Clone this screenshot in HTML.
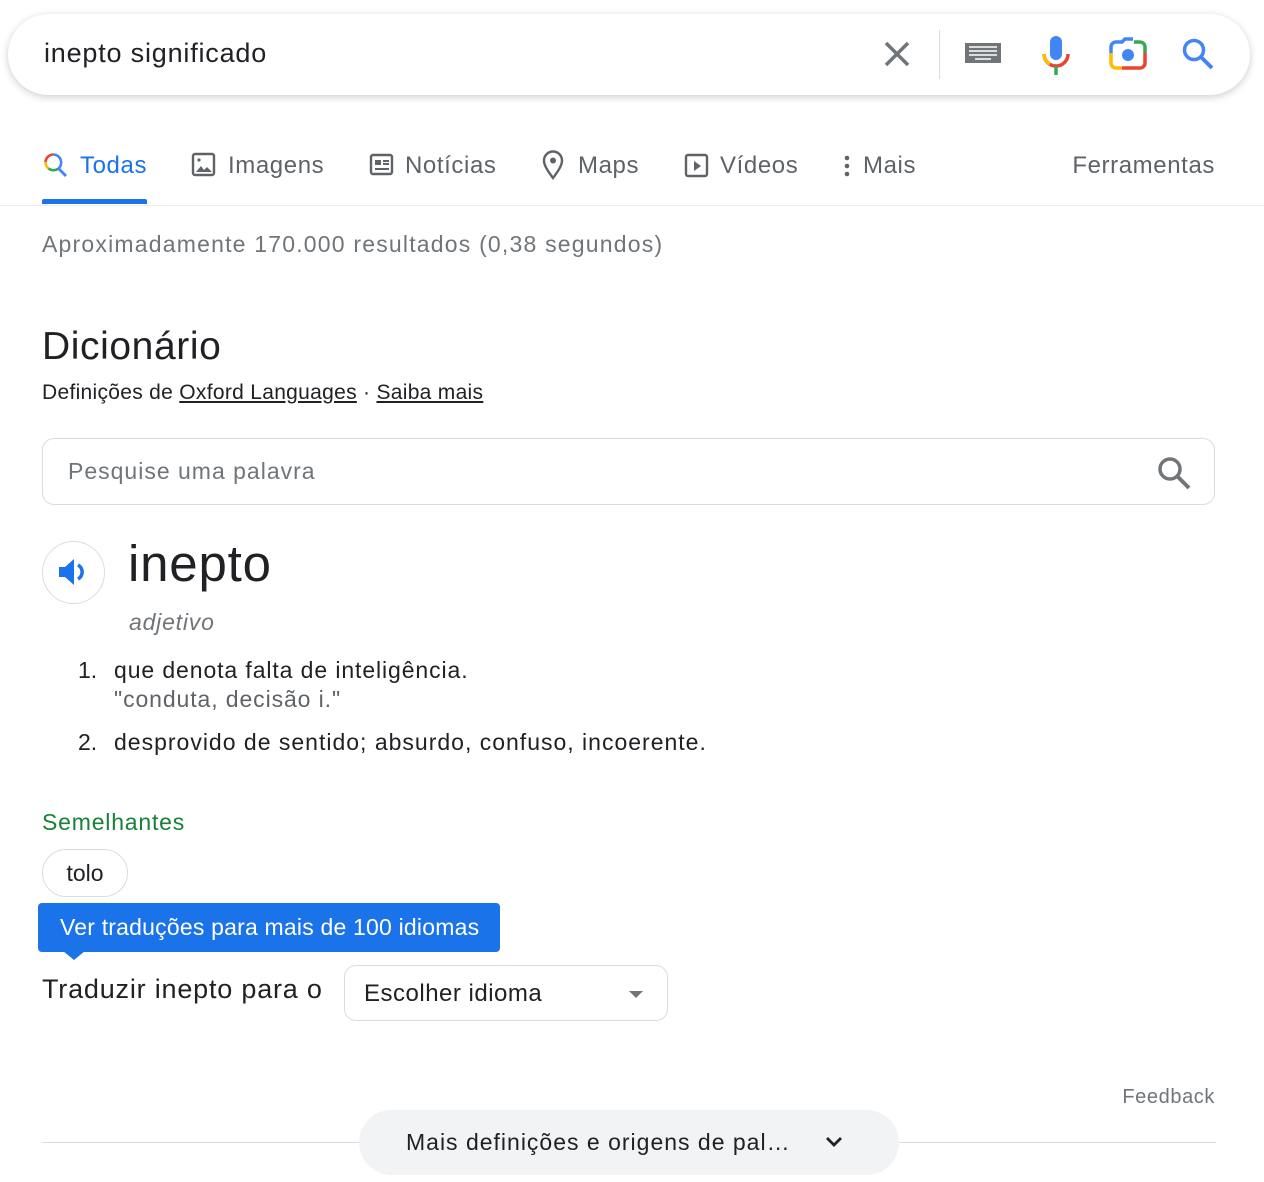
<!DOCTYPE html>
<html><head><meta charset="utf-8"><style>
*{margin:0;padding:0;box-sizing:border-box}
body{width:1264px;height:1182px;background:#fff;font-family:"Liberation Sans",Arial,sans-serif;color:#202124;position:relative;overflow:hidden}
.a{position:absolute;white-space:nowrap}
.sb{left:8px;top:14px;width:1242px;height:81px;border-radius:41px;box-shadow:0 2px 8px rgba(0,0,0,.2);background:#fff}
.tab{top:152px;font-size:24px;color:#5f6368;letter-spacing:.6px}
</style></head><body>
<div class="a sb"></div>
<div class="a" style="left:44px;top:38px;font-size:27px;color:#202124;letter-spacing:.8px">inepto significado</div>
<svg class="a" style="left:882px;top:39px" width="30" height="30" viewBox="0 0 30 30"><path d="M4 4L26 26M26 4L4 26" stroke="#70757a" stroke-width="3.5"/></svg>
<div class="a" style="left:939px;top:30px;width:1px;height:49px;background:#dadce0"></div>
<svg class="a" style="left:965px;top:43px" width="36" height="22" viewBox="0 0 36 22"><rect width="36" height="20" fill="#70757a"/><g fill="#ddd"><rect x="4" y="3" width="28" height="2"/><rect x="4" y="7" width="28" height="2"/><rect x="4" y="11" width="28" height="2"/><rect x="10" y="15" width="16" height="2"/></g></svg>
<svg class="a" style="left:1040px;top:34px" width="32" height="42" viewBox="0 0 32 42"><rect x="10" y="2" width="12" height="24" rx="6" fill="#4285f4"/><path d="M4 20a12 12 0 0 0 24 0" fill="none" stroke="#ea4335" stroke-width="3.5"/><path d="M4 20a12 12 0 0 0 6 10" fill="none" stroke="#fbbc04" stroke-width="3.5"/><rect x="14.3" y="32" width="3.4" height="9" fill="#34a853"/></svg>
<svg class="a" style="left:1108px;top:37px" width="40" height="36" viewBox="0 0 40 36"><path d="M3 16V10a5 5 0 0 1 5-5h6l3-3h8" fill="none" stroke="#4285f4" stroke-width="3.5"/><path d="M26 5h6a5 5 0 0 1 5 5v6" fill="none" stroke="#34a853" stroke-width="3.5"/><path d="M37 16v10a5 5 0 0 1-5 5H14" fill="none" stroke="#ea4335" stroke-width="3.5"/><path d="M14 31H8a5 5 0 0 1-5-5V16" fill="none" stroke="#fbbc04" stroke-width="3.5"/><circle cx="20" cy="18" r="6" fill="#4285f4"/></svg>
<svg class="a" style="left:1181px;top:37px" width="34" height="34" viewBox="0 0 34 34"><circle cx="13" cy="13" r="9.5" fill="none" stroke="#4285f4" stroke-width="3.5"/><path d="M20 20L31 31" stroke="#4285f4" stroke-width="4"/></svg>

<svg class="a" style="left:43px;top:152px" width="26" height="26" viewBox="0 0 26 26"><path d="M10 2.5a8 8 0 0 0-7.5 7.5" fill="none" stroke="#ea4335" stroke-width="2.6"/><path d="M2.5 10a8 8 0 0 0 3 6.5" fill="none" stroke="#fbbc04" stroke-width="2.6"/><path d="M5.5 16.5a8 8 0 0 0 10 0" fill="none" stroke="#34a853" stroke-width="2.6"/><path d="M15.5 16.5a8 8 0 0 0-5.5-14" fill="none" stroke="#4285f4" stroke-width="2.6"/><path d="M15 16L23 24" stroke="#4285f4" stroke-width="2.8"/></svg>
<div class="a tab" style="left:80px;color:#1a73e8">Todas</div>
<div class="a" style="left:42px;top:199px;width:105px;height:5px;background:#1a73e8;border-radius:2px 2px 0 0"></div>
<svg class="a" style="left:191px;top:152px" width="26" height="26" viewBox="0 0 26 26"><rect x="2" y="2" width="21" height="21" rx="2" fill="none" stroke="#5f6368" stroke-width="2.4"/><path d="M5 20l5-6 3 4 3-3 5 5z" fill="#5f6368"/><circle cx="8" cy="8" r="1.6" fill="#5f6368"/></svg>
<div class="a tab" style="left:228px">Imagens</div>
<svg class="a" style="left:369px;top:153px" width="26" height="24" viewBox="0 0 26 24"><rect x="2" y="2" width="21" height="19" rx="2" fill="none" stroke="#5f6368" stroke-width="2.4"/><rect x="6" y="7" width="6" height="5" fill="#5f6368"/><path d="M14 8h6M14 11h6M6 16h14" stroke="#5f6368" stroke-width="2"/></svg>
<div class="a tab" style="left:405px">Notícias</div>
<svg class="a" style="left:542px;top:150px" width="22" height="30" viewBox="0 0 22 30"><path d="M11 28C5 20 2 15 2 10.5a9 9 0 0 1 18 0C20 15 17 20 11 28z" fill="none" stroke="#5f6368" stroke-width="2.4"/><circle cx="11" cy="10.5" r="3" fill="#5f6368"/></svg>
<div class="a tab" style="left:578px">Maps</div>
<svg class="a" style="left:684px;top:153px" width="26" height="26" viewBox="0 0 26 26"><rect x="2" y="2" width="21" height="21" rx="2" fill="none" stroke="#5f6368" stroke-width="2.4"/><path d="M10 8v10l7-5z" fill="#5f6368"/></svg>
<div class="a tab" style="left:720px">Vídeos</div>
<svg class="a" style="left:843px;top:154px" width="8" height="24" viewBox="0 0 8 24"><circle cx="4" cy="4" r="2.3" fill="#5f6368"/><circle cx="4" cy="12" r="2.3" fill="#5f6368"/><circle cx="4" cy="20" r="2.3" fill="#5f6368"/></svg>
<div class="a tab" style="left:863px">Mais</div>
<div class="a tab" style="right:49px">Ferramentas</div>
<div class="a" style="left:0;top:205px;width:1264px;height:1px;background:#ebebeb"></div>

<div class="a" style="left:42px;top:231px;font-size:23px;color:#70757a;letter-spacing:1.2px">Aproximadamente 170.000 resultados (0,38 segundos)</div>
<div class="a" style="left:42px;top:325px;font-size:39px;color:#202124;letter-spacing:.6px">Dicionário</div>
<div class="a" style="left:42px;top:381px;font-size:21px;color:#202124;letter-spacing:.3px">Definições de <u>Oxford Languages</u> · <u>Saiba mais</u></div>
<div class="a" style="left:42px;top:438px;width:1173px;height:67px;border:1px solid #dadce0;border-radius:12px"></div>
<div class="a" style="left:68px;top:458px;font-size:23px;color:#70757a;letter-spacing:1px">Pesquise uma palavra</div>
<svg class="a" style="left:1156px;top:455px" width="36" height="36" viewBox="0 0 36 36"><circle cx="14" cy="14" r="10" fill="none" stroke="#70757a" stroke-width="3.5"/><path d="M21 21L33 33" stroke="#70757a" stroke-width="4"/></svg>

<div class="a" style="left:42px;top:541px;width:63px;height:63px;border:1px solid #dadce0;border-radius:50%"></div>
<svg class="a" style="left:56px;top:556px" width="34" height="32" viewBox="0 0 34 32"><path d="M3 11h6l9-8v26l-9-8H3z" fill="#1a73e8"/><path d="M22 9a8 8 0 0 1 0 14" fill="none" stroke="#1a73e8" stroke-width="3.5"/></svg>
<div class="a" style="left:128px;top:534px;font-size:51px;color:#202124;letter-spacing:.8px">inepto</div>
<div class="a" style="left:129px;top:609px;font-size:23px;font-style:italic;color:#70757a;letter-spacing:.8px">adjetivo</div>
<div class="a" style="left:78px;top:657px;font-size:23px">1.</div>
<div class="a" style="left:114px;top:657px;font-size:23px;letter-spacing:.9px">que denota falta de inteligência.</div>
<div class="a" style="left:114px;top:686px;font-size:23px;color:#5f6368;letter-spacing:.9px">"conduta, decisão i."</div>
<div class="a" style="left:78px;top:729px;font-size:23px">2.</div>
<div class="a" style="left:114px;top:729px;font-size:23px;letter-spacing:1px">desprovido de sentido; absurdo, confuso, incoerente.</div>
<div class="a" style="left:42px;top:809px;font-size:23px;color:#188038;letter-spacing:.8px">Semelhantes</div>
<div class="a" style="left:42px;top:849px;width:86px;height:48px;border:1px solid #dadce0;border-radius:24px;font-size:23px;text-align:center;line-height:46px">tolo</div>
<div class="a" style="left:38px;top:903px;width:462px;height:49px;background:#1a73e8;border-radius:4px;color:#fff;font-size:23px;line-height:48px;padding-left:22px;letter-spacing:.2px">Ver traduções para mais de 100 idiomas</div>
<div class="a" style="left:63px;top:951px;width:0;height:0;border-left:11px solid transparent;border-right:11px solid transparent;border-top:9px solid #1a73e8"></div>
<div class="a" style="left:42px;top:974px;font-size:27px;letter-spacing:.8px">Traduzir inepto para o</div>
<div class="a" style="left:344px;top:965px;width:324px;height:56px;border:1px solid #dadce0;border-radius:12px"></div>
<div class="a" style="left:364px;top:980px;font-size:24px;letter-spacing:.5px">Escolher idioma</div>
<div class="a" style="left:629px;top:991px;width:0;height:0;border-left:7px solid transparent;border-right:7px solid transparent;border-top:7px solid #70757a"></div>
<div class="a" style="right:49px;top:1086px;font-size:20px;color:#70757a;letter-spacing:.6px">Feedback</div>
<div class="a" style="left:42px;top:1142px;width:1174px;height:1px;background:#dadce0"></div>
<div class="a" style="left:359px;top:1110px;width:540px;height:65px;background:#f1f3f4;border-radius:33px"></div>
<div class="a" style="left:406px;top:1129px;font-size:23px;letter-spacing:1px">Mais definições e origens de pal…</div>
<svg class="a" style="left:824px;top:1134px" width="20" height="16" viewBox="0 0 20 16"><path d="M3 4l7 7 7-7" fill="none" stroke="#202124" stroke-width="2.8"/></svg>
</body></html>
